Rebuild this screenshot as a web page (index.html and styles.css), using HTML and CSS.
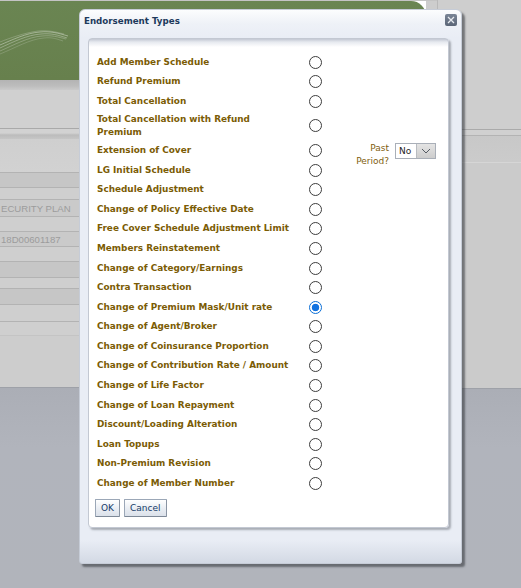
FILE: index.html
```html
<!DOCTYPE html>
<html>
<head>
<meta charset="utf-8">
<link rel="stylesheet" href="styles.css">
</head>
<body>
<div class="page">
  <div class="bg-left">
    <div class="top-line"></div>
    <div class="banner-row">
      <div class="banner">
        <svg class="swoosh" width="70" height="34" viewBox="0 0 70 34">
          <g fill="none" stroke="#ffffff" stroke-width="0.7">
            <path d="M0 22 C12 17 26 10 40 9 C50 8 58 10 68 13" opacity="0.55"/>
            <path d="M0 25 C13 19 27 12 41 11 C51 10 58 12 67 15" opacity="0.45"/>
            <path d="M0 28 C14 22 28 14 42 13 C52 12 58 14 66 16" opacity="0.35"/>
            <path d="M0 19 C10 15 24 10 38 8 C48 7 56 9 64 11" opacity="0.3"/>
            <path d="M0 31 C15 25 30 16 44 15 C52 14 57 16 63 18" opacity="0.25"/>
          </g>
        </svg>
      </div>
      <div class="banner-gap"></div>
    </div>
    <div class="shade1"></div>
    <div class="light1"></div>
    <div class="shade2"></div>
    <div class="light2"></div>
    <div class="row dark h14"></div>
    <div class="row h11"></div>
    <div class="row cell h16"><span class="cell-text">ECURITY PLAN</span></div>
    <div class="row h14"></div>
    <div class="row cell h14"><span class="cell-text">18D00601187</span></div>
    <div class="row h14"></div>
    <div class="row dark h15"></div>
    <div class="row h10"></div>
    <div class="row dark h15"></div>
    <div class="row h16"></div>
    <div class="row soft h13"></div>
    <div class="light3"></div>
    <div class="rest"></div>
  </div>
  <div class="bg-right">
    <div class="r1"></div>
    <div class="r2"></div>
    <div class="r3"></div>
    <div class="r4"></div>
    <div class="rest"></div>
  </div>
</div>

<div class="dialog">
  <div class="dlg-head">
    <span class="dlg-title">Endorsement Types</span>
    <span class="dlg-close">
      <svg width="12" height="12" viewBox="0 0 12 12">
        <path d="M3 3 L9 9 M9 3 L3 9" stroke="#e8ebf0" stroke-width="1.3" fill="none"/>
      </svg>
    </span>
  </div>
  <div class="dlg-body">
    <div class="panel">
      <div class="form">
        <span class="lbl">Add Member Schedule</span><span class="rcell"><span class="radio"></span></span>
        <span class="lbl">Refund Premium</span><span class="rcell"><span class="radio"></span></span>
        <span class="lbl">Total Cancellation</span><span class="rcell"><span class="radio"></span></span>
        <span class="lbl">Total Cancellation with Refund<br>Premium</span><span class="rcell"><span class="radio"></span></span>
        <span class="lbl">Extension of Cover</span><span class="rcell"><span class="radio"></span></span>
        <span class="lbl">LG Initial Schedule</span><span class="rcell"><span class="radio"></span></span>
        <span class="lbl">Schedule Adjustment</span><span class="rcell"><span class="radio"></span></span>
        <span class="lbl">Change of Policy Effective Date</span><span class="rcell"><span class="radio"></span></span>
        <span class="lbl">Free Cover Schedule Adjustment Limit</span><span class="rcell"><span class="radio"></span></span>
        <span class="lbl">Members Reinstatement</span><span class="rcell"><span class="radio"></span></span>
        <span class="lbl">Change of Category/Earnings</span><span class="rcell"><span class="radio"></span></span>
        <span class="lbl">Contra Transaction</span><span class="rcell"><span class="radio"></span></span>
        <span class="lbl">Change of Premium Mask/Unit rate</span><span class="rcell"><span class="radio checked"></span></span>
        <span class="lbl">Change of Agent/Broker</span><span class="rcell"><span class="radio"></span></span>
        <span class="lbl">Change of Coinsurance Proportion</span><span class="rcell"><span class="radio"></span></span>
        <span class="lbl">Change of Contribution Rate / Amount</span><span class="rcell"><span class="radio"></span></span>
        <span class="lbl">Change of Life Factor</span><span class="rcell"><span class="radio"></span></span>
        <span class="lbl">Change of Loan Repayment</span><span class="rcell"><span class="radio"></span></span>
        <span class="lbl">Discount/Loading Alteration</span><span class="rcell"><span class="radio"></span></span>
        <span class="lbl">Loan Topups</span><span class="rcell"><span class="radio"></span></span>
        <span class="lbl">Non-Premium Revision</span><span class="rcell"><span class="radio"></span></span>
        <span class="lbl">Change of Member Number</span><span class="rcell"><span class="radio"></span></span>

        <div class="past">
          <span class="past-lbl">Past<br>Period?</span>
          <span class="select">
            <span class="select-val">No</span>
            <span class="select-btn">
              <svg width="10" height="6" viewBox="0 0 10 6"><path d="M1 1 L5 5 L9 1" fill="none" stroke="#555b63" stroke-width="1"/></svg>
            </span>
          </span>
        </div>
      </div>
      <div class="buttons">
        <span class="btn">OK</span>
        <span class="btn">Cancel</span>
      </div>
    </div>
  </div>
  <div class="dlg-foot"></div>
</div>
</body>
</html>
```

FILE: styles.css
```css
html, body {
  margin: 0;
  padding: 0;
}
body {
  width: 521px;
  height: 588px;
  overflow: hidden;
  position: relative;
  font-family: "DejaVu Sans", Verdana, sans-serif;
}
.page {
  display: flex;
  width: 521px;
  height: 588px;
  overflow: hidden;
}
.bg-left {
  width: 437px;
  display: flex;
  flex-direction: column;
}
.bg-right {
  flex: 1;
  display: flex;
  flex-direction: column;
}
.top-line {
  height: 1px;
  background: #c4c4c4;
}
.banner-row {
  height: 79px;
  display: flex;
}
.banner {
  width: 426px;
  background: linear-gradient(to bottom, #6a8552, #67804d);
  border-top-right-radius: 15px;
  padding-top: 22px;
  box-sizing: border-box;
}
.swoosh {
  display: block;
}
.banner-gap {
  flex: 1;
  background: #cdcdcd;
}
.shade1 {
  height: 10px;
  background: linear-gradient(to bottom, #b4b4b4, #bdbdbd 60%, #cacaca);
}
.light1 {
  height: 38px;
  background: #d0d0d0;
  border-bottom: 1px solid #a9a9a9;
}
.shade2 {
  height: 10px;
  background: linear-gradient(to bottom, #d2d2d2 0, #d2d2d2 40%, #bcbcbc 60%, #c6c6c6);
}
.light2 {
  height: 33px;
  background: linear-gradient(to bottom, #cfcfcf, #d2d2d2);
  border-bottom: 1px solid #b3b3b3;
}
.row {
  background: #cfcfcf;
  border-bottom: 1px solid #b3b3b3;
}
.row.dark {
  background: #c6c6c6;
}
.row.soft {
  border-bottom-color: #c4c4c4;
}
.row.cell {
  background: #cacaca;
  display: flex;
  align-items: center;
}
.cell-text {
  font-family: "Liberation Sans", Arial, sans-serif;
  font-size: 9.6px;
  color: #9c9c9c;
  padding-left: 1px;
  white-space: nowrap;
}
.h10 { height: 10px; }
.h11 { height: 11px; }
.h13 { height: 13px; }
.h14 { height: 14px; }
.h15 { height: 15px; }
.h16 { height: 16px; }
.light3 {
  height: 51px;
  background: #cdcdcd;
  border-bottom: 1px solid #9ea1a8;
}
.rest {
  flex: 1;
  background: linear-gradient(to bottom, #abaeb6, #b1b4bc 30%, #b1b4bb);
}
.r1 {
  height: 129px;
  background: #cecece;
  border-left: 1px solid #b9b9b9;
  border-bottom: 1px solid #aaaaaa;
}
.r2 {
  height: 5px;
  background: #d0d0d0;
  border-bottom: 1px solid #b3b3b3;
}
.r3 {
  height: 26px;
  background: linear-gradient(to bottom, #c8c8c8, #cbcbcb);
  border-bottom: 1px solid #d6d6d6;
}
.r4 {
  height: 225px;
  background: #cbcbcb;
  border-bottom: 1px solid #9ea1a8;
}

/* dialog */
.dialog {
  position: absolute;
  left: 79px;
  top: 9px;
  width: 383px;
  height: 555px;
  box-sizing: border-box;
  border: 1px solid #c6ccd7;
  border-radius: 6px 6px 3px 3px;
  background: linear-gradient(to bottom, #fcfdfe 0, #eef1f7 14px, #e9edf5 28px, #e9edf5 530px, #d3d9e4 100%);
  box-shadow: 3px 3px 2px rgba(55, 58, 64, 0.6);
  display: flex;
  flex-direction: column;
}
.dlg-head {
  height: 28px;
  display: flex;
  align-items: flex-start;
  padding: 0 4px 0 4px;
  box-sizing: border-box;
}
.dlg-title {
  font-weight: bold;
  font-size: 8.7px;
  line-height: 13px;
  color: #1d3a5c;
  padding-top: 5px;
}
.dlg-close {
  margin-left: auto;
  margin-top: 4px;
  width: 12px;
  height: 12px;
  border-radius: 2px;
  background: linear-gradient(to bottom, #7a8596, #5b6576);
  display: flex;
}
.dlg-body {
  padding: 0 12px 0 8px;
}
.panel {
  height: 490px;
  box-sizing: border-box;
  border: 1px solid #c3c8d2;
  border-radius: 4px;
  background: linear-gradient(to bottom, #c3c8d3 0, #e6e9ef 3px, #ffffff 8px);
  box-shadow: 2px 2px 2px rgba(90, 95, 105, 0.45);
  padding: 13.5px 0 0 8px;
}
.form {
  display: grid;
  grid-template-columns: 212px 13px auto;
  align-items: center;
}
.lbl {
  grid-column: 1;
  font-weight: bold;
  font-size: 8.9px;
  line-height: 13px;
  padding: 1.7px 0;
  color: #7b5c05;
  white-space: nowrap;
}
.rcell {
  grid-column: 2;
  height: 19.6px;
  display: flex;
  align-items: center;
}
.radio {
  width: 13px;
  height: 13px;
  box-sizing: border-box;
  border: 1px solid #3d3d3d;
  border-radius: 50%;
  background: #ffffff;
}
.radio.checked {
  border-color: #0b6fd6;
  background: radial-gradient(circle, #1273e0 0, #1273e0 3.4px, #ffffff 4.1px);
}
.past {
  grid-column: 3;
  grid-row: 5 / span 2;
  align-self: start;
  display: flex;
  align-items: flex-start;
  margin-left: 33px;
  padding-top: 1px;
}
.past-lbl {
  font-size: 9px;
  line-height: 13px;
  color: #7f6010;
  text-align: right;
  width: 34px;
}
.select {
  margin-left: 6px;
  margin-top: 1px;
  width: 41px;
  height: 16px;
  box-sizing: border-box;
  border: 1px solid #a9afb8;
  background: #ffffff;
  display: flex;
}
.select-val {
  font-size: 9px;
  line-height: 14px;
  color: #1e1e1e;
  padding-left: 3px;
  flex: 1;
}
.select-btn {
  width: 18px;
  border-left: 1px solid #b9bcc1;
  background: linear-gradient(to bottom, #e4e4e4, #cdcdcd);
  display: flex;
  align-items: center;
  justify-content: center;
}
.buttons {
  display: flex;
  gap: 4px;
  margin-top: 6px;
  margin-left: -2px;
}
.btn {
  height: 18px;
  box-sizing: border-box;
  padding: 0 5px;
  border: 1px solid #9ba7b7;
  border-bottom-color: #7d8897;
  border-right-color: #8994a3;
  border-radius: 1px;
  background: linear-gradient(to bottom, #ffffff, #e9edf3 55%, #dbe1ea);
  font-size: 9px;
  line-height: 16px;
  color: #163c68;
}
.dlg-foot {
  flex: 1;
}
```
